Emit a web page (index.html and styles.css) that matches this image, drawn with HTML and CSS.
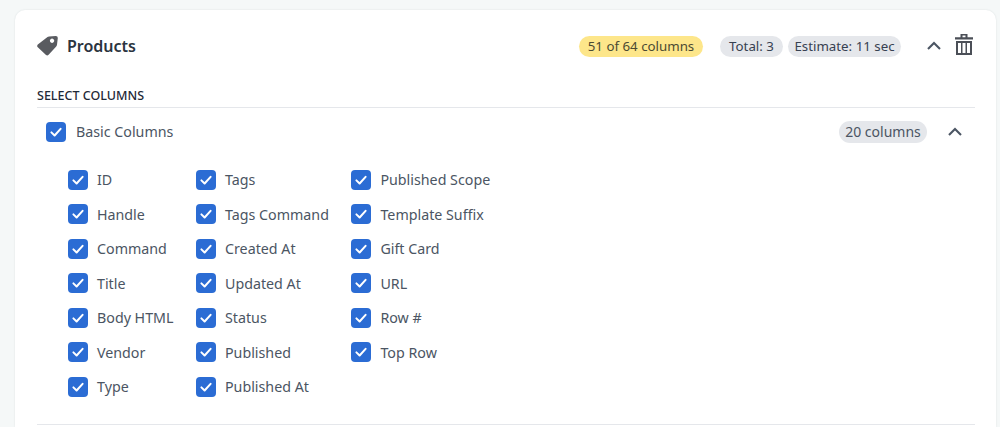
FILE: index.html
```html
<!DOCTYPE html>
<html lang="en">
<head>
<meta charset="utf-8">
<title>Products</title>
<link rel="stylesheet" href="styles.css">
</head>
<body>
<svg width="0" height="0" class="defs"><defs>
<symbol id="check" viewBox="0 0 20 20"><path d="M5.400 10.400l3.200 3.100 6-6.700" fill="none" stroke="#fff" stroke-width="2" stroke-linecap="round" stroke-linejoin="round"/></symbol>
<symbol id="chev" viewBox="0 0 16 10"><path d="M2 8l6-6 6 6" fill="none" stroke="#4b5563" stroke-width="2.100"/></symbol>
</defs></svg>
<main class="card">
  <header class="head">
    <svg class="tag" viewBox="0 0 21 20"><path fill="#595b60" fill-rule="evenodd" d="M10.500 1Q11.200.7 12 .6L18.800 0A2 2 0 0 1 20.800 2L20 8.800Q19.900 10 19 10.800L11.600 18.800A2 2 0 0 1 9 19L.8 11.300A2 2 0 0 1 .8 8.600zM13.600 3.300a2 2 0 1 0 2.900 2.900 2 2 0 0 0-2.900-2.900z"/></svg>
    <h1 class="title">Products</h1>
    <div class="head-right">
      <span class="badge yellow">51 of 64 columns</span>
      <span class="badge gray first">Total: 3</span>
      <span class="badge gray">Estimate: 11 sec</span>
      <svg class="chev chev-head"><use href="#chev"/></svg>
      <svg class="trash" viewBox="0 0 18 21"><path fill="#4b4f57" fill-rule="evenodd" d="M5.500 0h7v3.300H18v2.200H0V3.300h5.500zM7.500 1.600v1.700h3V1.600zM1 7h16v14H1zM3 9v10h3V9zm4.500 0v10h3V9zM12 9v10h3V9z"/></svg>
    </div>
  </header>
  <h2 class="section">SELECT COLUMNS</h2>
  <section class="group">
    <div class="group-head">
      <label class="item parent"><svg class="box"><use href="#check"/></svg><span>Basic Columns</span></label>
      <span class="badge gray count">20 columns</span>
      <svg class="chev chev-group"><use href="#chev"/></svg>
    </div>
    <div class="cols">
      <div class="col">
        <label class="item"><svg class="box"><use href="#check"/></svg><span>ID</span></label>
        <label class="item"><svg class="box"><use href="#check"/></svg><span>Handle</span></label>
        <label class="item"><svg class="box"><use href="#check"/></svg><span>Command</span></label>
        <label class="item"><svg class="box"><use href="#check"/></svg><span>Title</span></label>
        <label class="item"><svg class="box"><use href="#check"/></svg><span>Body HTML</span></label>
        <label class="item"><svg class="box"><use href="#check"/></svg><span>Vendor</span></label>
        <label class="item"><svg class="box"><use href="#check"/></svg><span>Type</span></label>
      </div>
      <div class="col">
        <label class="item"><svg class="box"><use href="#check"/></svg><span>Tags</span></label>
        <label class="item"><svg class="box"><use href="#check"/></svg><span>Tags Command</span></label>
        <label class="item"><svg class="box"><use href="#check"/></svg><span>Created At</span></label>
        <label class="item"><svg class="box"><use href="#check"/></svg><span>Updated At</span></label>
        <label class="item"><svg class="box"><use href="#check"/></svg><span>Status</span></label>
        <label class="item"><svg class="box"><use href="#check"/></svg><span>Published</span></label>
        <label class="item"><svg class="box"><use href="#check"/></svg><span>Published At</span></label>
      </div>
      <div class="col">
        <label class="item"><svg class="box"><use href="#check"/></svg><span>Published Scope</span></label>
        <label class="item"><svg class="box"><use href="#check"/></svg><span>Template Suffix</span></label>
        <label class="item"><svg class="box"><use href="#check"/></svg><span>Gift Card</span></label>
        <label class="item"><svg class="box"><use href="#check"/></svg><span>URL</span></label>
        <label class="item"><svg class="box"><use href="#check"/></svg><span>Row #</span></label>
        <label class="item"><svg class="box"><use href="#check"/></svg><span>Top Row</span></label>
      </div>
    </div>
  </section>
</main>
</body>
</html>
```
FILE: styles.css
```css
* { box-sizing: border-box; }
html, body { height: 100%; }
body {
  margin: 0;
  padding: 10px 4px 0 15px;
  overflow: hidden;
  background: #f5f8f8;
  font-family: "Noto Sans", "Open Sans", sans-serif;
  font-size: 14px;
  color: #4b5563;
}
.defs { position: absolute; }
.card {
  background: #fff;
  border-radius: 10px 10px 0 0;
  box-shadow: 0 0 2px rgba(30, 50, 60, .12);
  padding: 0 21px 0 22px;
  height: 100%;
}
.head { display: flex; align-items: center; height: 72px; }
.tag { width: 21px; height: 20px; margin-right: 9px; margin-top: -1px; }
.title { margin: 0; font-size: 16px; font-weight: 600; color: #2b3440; }
.head-right { margin-left: auto; display: flex; align-items: center; margin-right: 2px; }
.badge {
  display: flex; align-items: center; justify-content: center;
  height: 21px; border-radius: 11px; font-size: 13.300px; color: #374151;
}
.yellow { background: #fde68a; width: 124px; color: #4b4a32; }
.gray { background: #e5e7eb; }
.first { width: 63px; margin: 0 5px 0 17px; }
.first + .gray { width: 113px; }
.chev { width: 16px; height: 10px; display: block; }
.chev-head { margin: 0 0 0 25px; }
.trash { width: 18px; height: 21px; margin-left: 13px; margin-top: -3px; }
.section {
  margin: 0;
  font-size: 12.500px; font-weight: 500; color: #1f2937;
  height: 26px; line-height: 27px;
  border-bottom: 1px solid #e5e7eb;
}
.group { border-bottom: 1px solid #e5e7eb; height: 317px; }
.group-head { display: flex; align-items: center; height: 47px; padding: 0 12px 0 9px; }
.parent { height: auto; }
.parent .box { margin-right: 10px; }
.count { width: 88px; height: 22px; margin-left: auto; color: #4b5563; font-size: 14px; }
.chev-group { margin-left: 20px; }
.cols { display: flex; gap: 22.500px; padding: 7.500px 0 0 31px; }
.col { display: flex; flex-direction: column; }
.item { display: flex; align-items: center; height: 34.500px; font-size: 14.250px; color: #4b5563; white-space: nowrap; }
.box { width: 20px; height: 20px; flex: none; margin-right: 9px; background: #2b6cd4; border-radius: 4px; }
```
